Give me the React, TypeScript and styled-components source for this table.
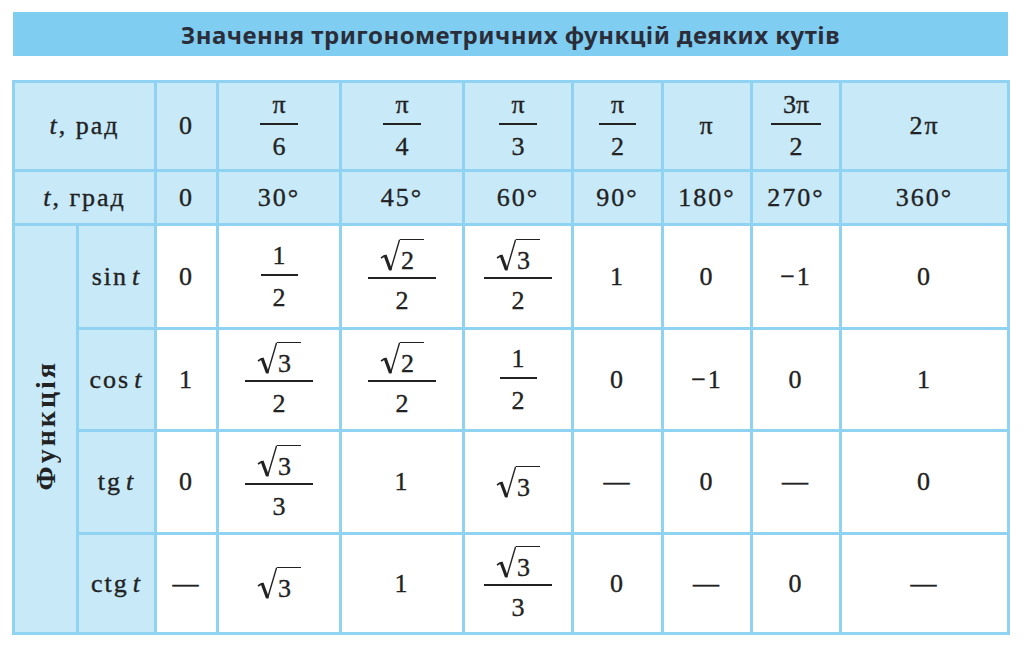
import styled, { createGlobalStyle } from "styled-components";
import type { FC, ReactNode } from "react";

const LINE = "#8fd2f2";
const HEAD = "#c8e9f8";
const INK = "#222222";
const SERIF = `"Liberation Serif", "Times New Roman", serif`;

const GlobalStyle = createGlobalStyle`
  body {
    margin: 0;
    background: #fff;
  }
`;

const Page = styled.div`
  width: 1024px;
  padding: 12px 0 0 13px;
  box-sizing: border-box;
`;

const TitleBar = styled.h1`
  margin: 0;
  width: 995px;
  height: 44px;
  background: #7fcdf0;
  display: flex;
  align-items: center;
  justify-content: center;
  font-family: "Noto Sans", sans-serif;
  font-weight: 700;
  font-size: 24px;
  letter-spacing: 0.5px;
  color: #2b2d3a;
`;

const Table = styled.table`
  margin: 24px 0 0 -1px;
  border-collapse: collapse;
  table-layout: fixed;
  width: 998px;
  color: ${INK};

  &,
  & * {
    font-family: ${SERIF};
    font-size: 26px;
  }
`;

const Row = styled.tr<{ $h: number }>`
  height: ${p => p.$h}px;
`;

const Cell = styled.td<{ $head?: boolean }>`
  border: 3px solid ${LINE};
  background: ${p => (p.$head ? HEAD : "#fff")};
  text-align: center;
  vertical-align: middle;
  padding: 0;
  white-space: nowrap;
  letter-spacing: 2px;
  -webkit-text-stroke: 0.35px ${INK};
`;

const SideLabel = styled.th`
  border: 3px solid ${LINE};
  background: ${HEAD};
  padding: 0;

  span {
    display: inline-block;
    font-size: 28px;
    font-weight: 700;
    letter-spacing: 3px;
    writing-mode: vertical-rl;
    transform: rotate(180deg);
  }
`;

const Var = styled.i`
  font-style: italic;
`;

const FnVar = styled.i`
  font-style: italic;
  margin-left: 4px;
`;

const FracBox = styled.span`
  display: inline-flex;
  flex-direction: column;
  align-items: center;
  vertical-align: middle;
  letter-spacing: 0;
`;

const Num = styled.span`
  display: flex;
  justify-content: center;
  line-height: 1;
  padding: 0 12px 5px;
  border-bottom: 2px solid ${INK};
`;

const Den = styled.span`
  line-height: 1;
  padding-top: 9px;
`;

const Radical = styled.span`
  display: inline-flex;
  align-items: stretch;
  vertical-align: middle;
  height: 33px;
  letter-spacing: 0;
`;

const RadSign = styled.svg`
  width: 20px;
  height: 33px;
  flex: none;
`;

const Radicand = styled.span`
  display: flex;
  align-items: flex-end;
  box-sizing: border-box;
  height: 33px;
  border-top: 1.5px solid ${INK};
  padding: 0 10px 0 1px;
  line-height: 22px;
`;

const Sqrt: FC<{ n: string }> = ({ n }) => (
  <Radical>
    <RadSign viewBox="0 0 20 33">
      <path d="M1 19 L5 16.5" stroke={INK} strokeWidth="1.6" fill="none" />
      <path d="M5 16 L10.5 31" stroke={INK} strokeWidth="3.2" fill="none" />
      <path d="M10.5 31.5 L19.6 0.75" stroke={INK} strokeWidth="1.4" fill="none" />
    </RadSign>
    <Radicand>{n}</Radicand>
  </Radical>
);

const Frac: FC<{ num: ReactNode; den: ReactNode }> = ({ num, den }) => (
  <FracBox>
    <Num>{num}</Num>
    <Den>{den}</Den>
  </FracBox>
);

const PI = "π";
const DASH = "—";
const MINUS_ONE = "−1";

type Val = ReactNode;

const rad: Val[] = [
  "0",
  <Frac num={PI} den="6" />,
  <Frac num={PI} den="4" />,
  <Frac num={PI} den="3" />,
  <Frac num={PI} den="2" />,
  PI,
  <Frac num={"3" + PI} den="2" />,
  "2" + PI,
];

const deg: Val[] = ["0", "30°", "45°", "60°", "90°", "180°", "270°", "360°"];

const fns: { name: string; h: number; vals: Val[] }[] = [
  {
    name: "sin",
    h: 104,
    vals: ["0", <Frac num="1" den="2" />, <Frac num={<Sqrt n="2" />} den="2" />, <Frac num={<Sqrt n="3" />} den="2" />, "1", "0", MINUS_ONE, "0"],
  },
  {
    name: "cos",
    h: 102,
    vals: ["1", <Frac num={<Sqrt n="3" />} den="2" />, <Frac num={<Sqrt n="2" />} den="2" />, <Frac num="1" den="2" />, "0", MINUS_ONE, "0", "1"],
  },
  {
    name: "tg",
    h: 103,
    vals: ["0", <Frac num={<Sqrt n="3" />} den="3" />, "1", <Sqrt n="3" />, DASH, "0", DASH, "0"],
  },
  {
    name: "ctg",
    h: 100,
    vals: [DASH, <Sqrt n="3" />, "1", <Frac num={<Sqrt n="3" />} den="3" />, "0", DASH, "0", DASH],
  },
];

const widths = [64, 78, 62, 123, 123, 109, 90, 89, 89, 168];

export default function App() {
  return (
    <Page>
      <GlobalStyle />
      <TitleBar>Значення тригонометричних функцій деяких кутів</TitleBar>
      <Table>
        <colgroup>
          {widths.map((w, i) => (
            <col key={i} style={{ width: w }} />
          ))}
        </colgroup>
        <tbody>
          <Row $h={89}>
            <Cell $head colSpan={2}>
              <Var>t</Var>, рад
            </Cell>
            {rad.map((v, i) => (
              <Cell $head key={i}>{v}</Cell>
            ))}
          </Row>
          <Row $h={54}>
            <Cell $head colSpan={2}>
              <Var>t</Var>, град
            </Cell>
            {deg.map((v, i) => (
              <Cell $head key={i}>{v}</Cell>
            ))}
          </Row>
          {fns.map((f, r) => (
            <Row $h={f.h} key={f.name}>
              {r === 0 && (
                <SideLabel rowSpan={4}>
                  <span>Функція</span>
                </SideLabel>
              )}
              <Cell $head>
                {f.name}
                <FnVar>t</FnVar>
              </Cell>
              {f.vals.map((v, i) => (
                <Cell key={i}>{v}</Cell>
              ))}
            </Row>
          ))}
        </tbody>
      </Table>
    </Page>
  );
}
